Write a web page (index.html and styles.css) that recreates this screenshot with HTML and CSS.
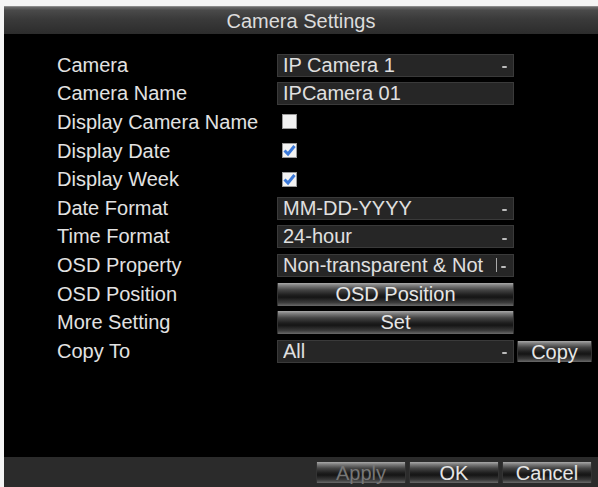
FILE: index.html
```html
<!DOCTYPE html>
<html lang="en">
  <head>
    <meta charset="UTF-8" />
    <title>Camera Settings</title>
    <link rel="stylesheet" href="styles.css">
  </head>
  <body>
    <div class="window">
      <div class="title">Camera Settings</div>
      <div class="content">
        <div class="form">
          <div class="label">Camera</div>
          <div class="field select"><span>IP Camera 1</span><i class="arrow"></i></div>
          <div></div>

          <div class="label">Camera Name</div>
          <div class="field"><span>IPCamera 01</span></div>
          <div></div>

          <div class="label">Display Camera Name</div>
          <div class="check-cell"><span class="check"></span></div>
          <div></div>

          <div class="label">Display Date</div>
          <div class="check-cell">
            <span class="check">
              <svg viewBox="0 0 15 15" width="15" height="15"><path d="M2.5 7.5 L6 11 L12.5 3" fill="none" stroke="#3a78d8" stroke-width="3" /></svg>
            </span>
          </div>
          <div></div>

          <div class="label">Display Week</div>
          <div class="check-cell">
            <span class="check">
              <svg viewBox="0 0 15 15" width="15" height="15"><path d="M2.5 7.5 L6 11 L12.5 3" fill="none" stroke="#3a78d8" stroke-width="3" /></svg>
            </span>
          </div>
          <div></div>

          <div class="label">Date Format</div>
          <div class="field select"><span>MM-DD-YYYY</span><i class="arrow"></i></div>
          <div></div>

          <div class="label">Time Format</div>
          <div class="field select"><span>24-hour</span><i class="arrow"></i></div>
          <div></div>

          <div class="label">OSD Property</div>
          <div class="field select"><span class="clip">Non-transparent &amp; Not</span><i class="bar"></i><i class="arrow"></i></div>
          <div></div>

          <div class="label">OSD Position</div>
          <div class="btn wide">OSD Position</div>
          <div></div>

          <div class="label">More Setting</div>
          <div class="btn wide">Set</div>
          <div></div>

          <div class="label">Copy To</div>
          <div class="field select"><span>All</span><i class="arrow"></i></div>
          <div class="btn copy">Copy</div>
        </div>
      </div>
      <div class="footer">
        <div class="btn foot disabled">Apply</div>
        <div class="btn foot">OK</div>
        <div class="btn foot">Cancel</div>
      </div>
    </div>
  </body>
</html>
```

FILE: styles.css
```css
body {
  margin: 0;
  background: #f4f4f4;
  font-family: "Liberation Sans", Arial, sans-serif;
  overflow: hidden;
}
.window {
  margin: 6px 0 0 4px;
  height: 481px;
  display: flex;
  flex-direction: column;
  background: #000;
}
.title {
  height: 28px;
  line-height: 28px;
  text-align: center;
  font-size: 20px;
  color: #dcdcdc;
  background: linear-gradient(#6a6a6a 0%, #4a4a4a 12%, #3a3a3a 45%, #2c2c2c 100%);
  border-top: 1px solid #8a8a8a;
  box-sizing: border-box;
}
.content {
  flex: 1;
  background: #000;
  padding: 17px 0 0 53px;
}
.form {
  display: grid;
  grid-template-columns: 217px 237px 75px;
  grid-auto-rows: 28.6px;
  align-items: center;
  column-gap: 3px;
}
.label {
  font-size: 20px;
  color: #e2e2e2;
  white-space: nowrap;
}
.field {
  height: 23px;
  background: #262626;
  border: 1px solid #3a3a3a;
  box-sizing: border-box;
  font-size: 20px;
  line-height: 21px;
  color: #e0e0e0;
  padding-left: 5px;
  display: flex;
  align-items: center;
  overflow: hidden;
  white-space: nowrap;
}
.field span {
  flex: 1;
  overflow: hidden;
}
.field .clip {
  flex: none;
  width: 212px;
}
.field .bar {
  width: 1px;
  height: 14px;
  background: #aaa;
  margin-left: 1px;
}
.arrow {
  display: block;
  width: 5px;
  height: 2px;
  background: #bbb;
  margin: 4px 6px 0 4px;
  border-radius: 1px;
}
.check-cell {
  padding-left: 5px;
  height: 16px;
}
.check {
  display: block;
  width: 15px;
  height: 15px;
  background: #f2f2f2;
  border: 1px solid #999;
  box-sizing: border-box;
}
.check svg {
  display: block;
  margin: -1px;
}
.btn {
  height: 23px;
  line-height: 23px;
  text-align: center;
  font-size: 20px;
  color: #e6e6e6;
  box-sizing: border-box;
  background: linear-gradient(#a8a8a8 0%, #7a7a7a 12%, #444 30%, #1e1e1e 52%, #151515 62%, #3a3a3a 85%, #6a6a6a 100%);
  border-left: 1px solid #333;
  border-right: 1px solid #333;
}
.btn.copy {
  height: 21px;
  line-height: 22px;
}
.footer {
  height: 30px;
  background: #2b2b2b;
  display: flex;
  justify-content: flex-end;
  align-items: center;
  gap: 3px;
  padding-right: 6px;
}
.btn.foot {
  width: 90px;
  height: 21px;
  line-height: 22px;
}
.btn.disabled {
  color: #777;
}
```
